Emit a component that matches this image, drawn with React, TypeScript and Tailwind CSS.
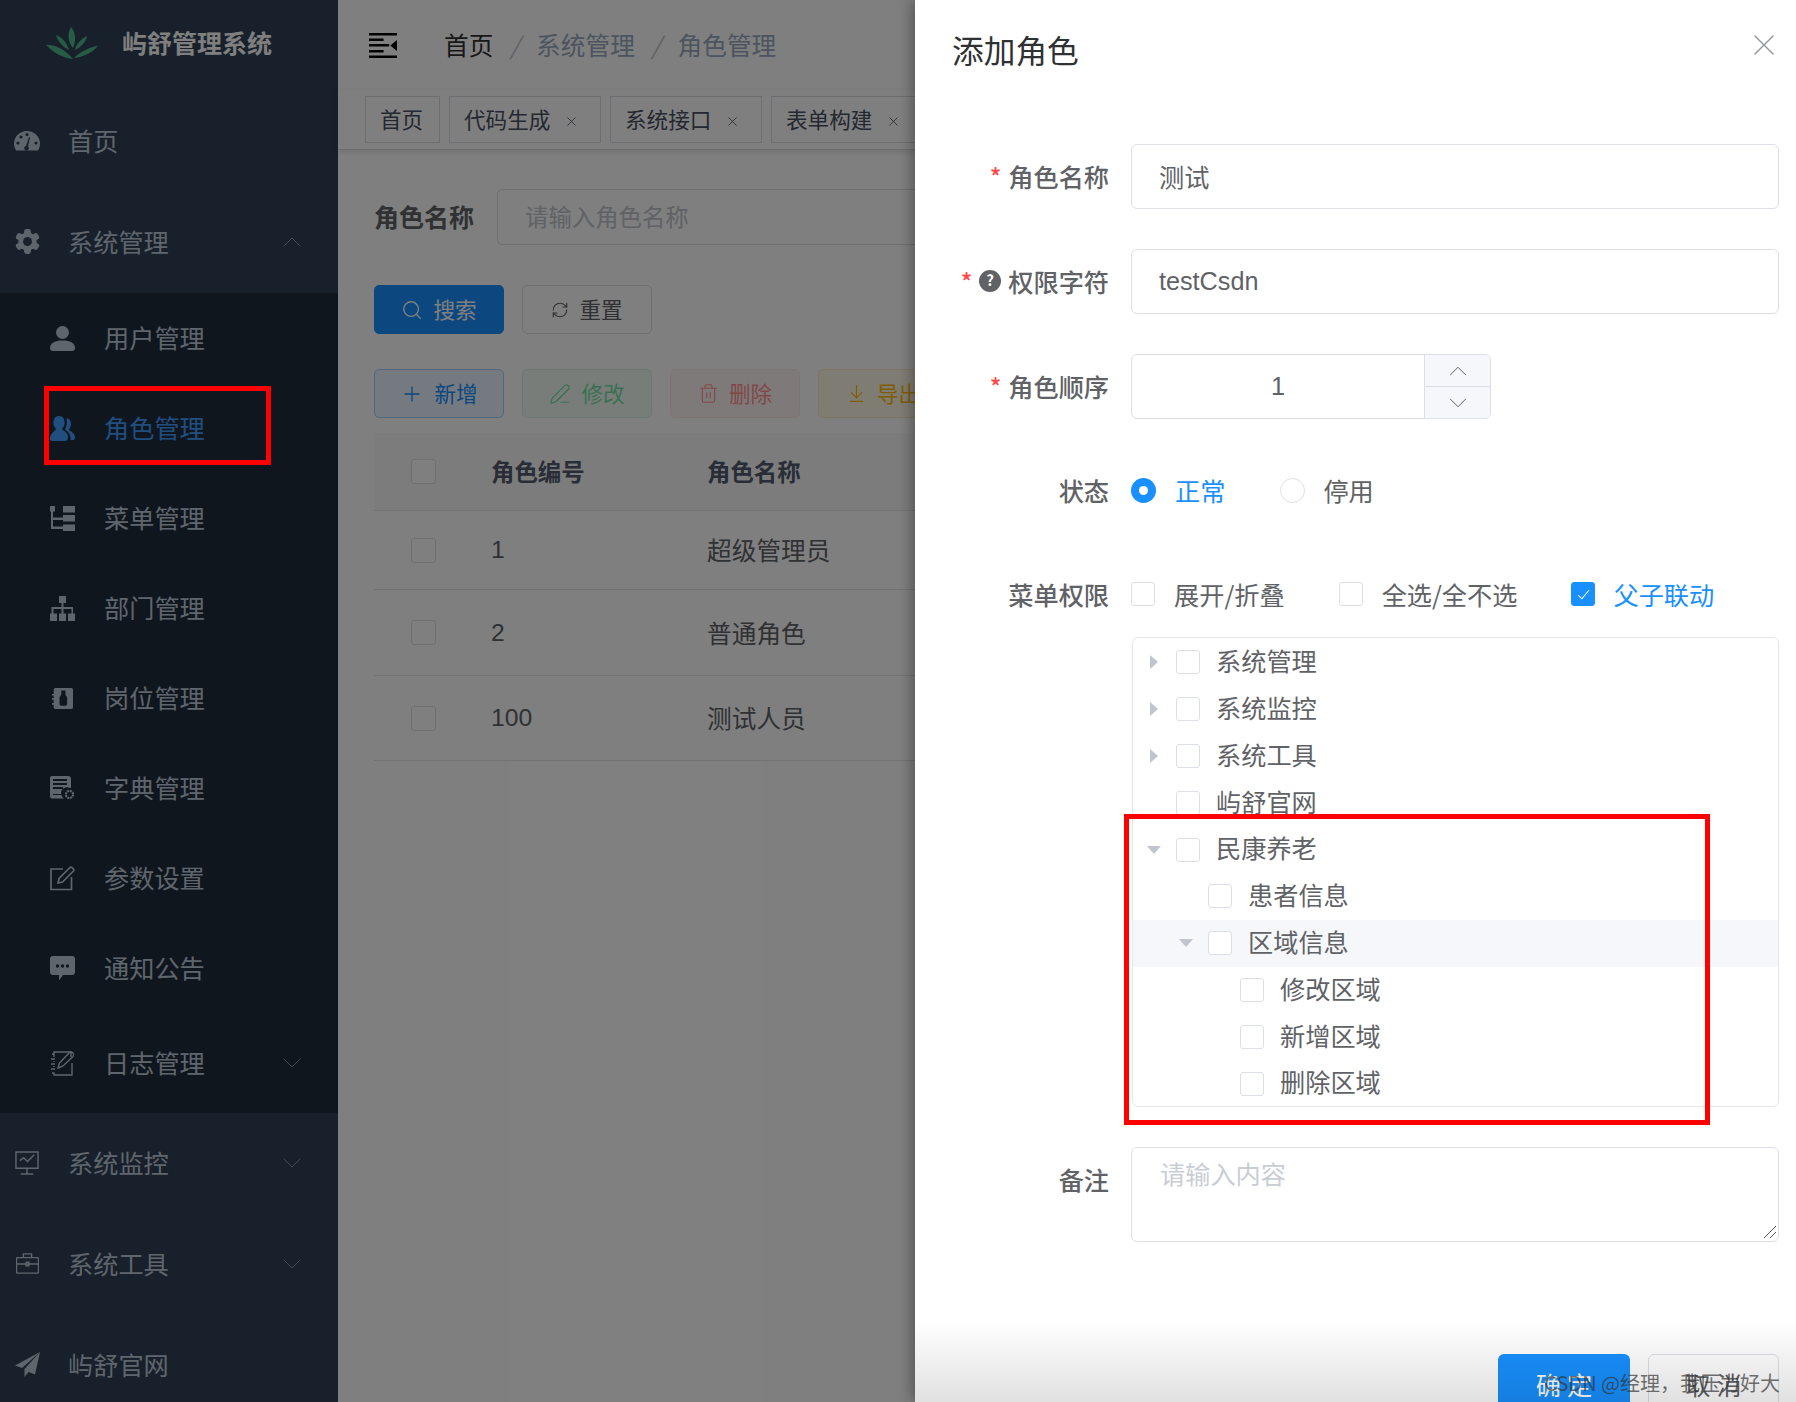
import type { ReactNode } from "react";
import { ArrowDownToLine, ChevronDown, ChevronUp, PenLine, Plus, RefreshCw, Search, Trash2, X } from "lucide-react";

const FONT = "font-['Noto_Sans_CJK_SC','Noto_Sans',sans-serif]";

const IconDashboard = () => (
    <svg viewBox="0 0 26 20" className="h-[20px] w-[26px]" fill="#bfcbd9">
        <path d="M13 0C5.8 0 0 5.6 0 12.6c0 2.6.8 5 2.2 7h21.6c1.4-2 2.2-4.4 2.2-7C26 5.6 20.2 0 13 0z" />
        <circle cx="4" cy="12" r="1.6" fill="#304156" />
        <circle cx="7" cy="6" r="1.6" fill="#304156" />
        <circle cx="13" cy="3.6" r="1.6" fill="#304156" />
        <circle cx="22" cy="12" r="1.6" fill="#304156" />
        <path d="M12 15l3-9 1 .4-2 9.2a2.2 2.2 0 1 1-2-.6z" fill="#304156" />
    </svg>
);

const IconGear = () => (
    <svg viewBox="0 0 26 26" className="h-[25px] w-[25px]" fill="#bfcbd9">
        <rect x="9.5" y="0" width="7" height="26" rx="2.5" />
        <rect x="9.5" y="0" width="7" height="26" rx="2.5" transform="rotate(60 13 13)" />
        <rect x="9.5" y="0" width="7" height="26" rx="2.5" transform="rotate(120 13 13)" />
        <circle cx="13" cy="13" r="9.5" />
        <circle cx="13" cy="13" r="4.6" fill="#304156" />
    </svg>
);

const IconUser = () => (
    <svg viewBox="0 0 25 25" className="h-[25px] w-[25px]" fill="#bfcbd9">
        <circle cx="12.5" cy="6.5" r="6.5" />
        <path d="M0 22c0-5 5-7.5 12.5-7.5S25 17 25 22c0 2-1 3-3 3H3c-2 0-3-1-3-3z" />
    </svg>
);

const IconPeople = () => (
    <svg viewBox="0 0 25 25" className="h-[25px] w-[25px]" fill="#409eff">
        <path d="M9 0c3.5 0 5.6 2.8 5.6 6.5 0 2.7-1 5-2.6 6.2 0 1.5 6 3 6 8.3 0 2.5-1 4-3 4H2c-1.5 0-2-1-2-2.5 0-5.5 6-8 6-9.8C4.4 11.5 3.4 9.2 3.4 6.5 3.4 2.8 5.5 0 9 0z" />
        <path d="M16.5 2c3 .6 4.5 3 4.5 6 0 2.5-1 4.5-2.2 5.5 0 1.2 6.2 3 6.2 7.5 0 2-.6 3-2 3h-2.5c.5-5-2-8-5.5-10.5 1.5-2.5 2.5-7.500 1.500-11.500z" />
    </svg>
);

const IconTree = () => (
    <svg viewBox="0 0 25 25" className="h-[25px] w-[25px]" fill="#bfcbd9">
        <path d="M0 0h5v5.500H3v6h10V14H3v6.500h10V23H1V5.500H0zM13 0h12v6.500H13zM13 9h12v6.500H13zM13 18.500h12V25H13z" />
    </svg>
);

const IconOrg = () => (
    <svg viewBox="0 0 25 25" className="h-[25px] w-[25px]" fill="#bfcbd9">
        <path d="M9 0h7v7h-2.500v4H23v6.500h2V25h-7v-7.500h3.500V13h-8v4.500H16V25H9v-7.500h2.500V13h-8v4.500H7V25H0v-7.500h1.500V11h10V7H9z" />
    </svg>
);

const IconPost = () => (
    <svg viewBox="0 0 25 25" className="h-[21px] w-[21px]" fill="#bfcbd9">
        <path
            fillRule="evenodd"
            d="M4 0h19a2 2 0 0 1 2 2v21a2 2 0 0 1-2 2H4a2 2 0 0 1-2-2v-3H0v-2h2v-4H0v-2h2V9H0V7h2V2a2 2 0 0 1 2-2zm7 3v5l-2 3v8a2 2 0 0 0 2 2h5a2 2 0 0 0 2-2v-8l-2-3V3z"
        />
    </svg>
);

const IconDict = () => (
    <svg viewBox="0 0 25 25" className="h-[25px] w-[25px]" fill="#bfcbd9">
        <path
            fillRule="evenodd"
            d="M2 0h16a3 3 0 0 1 3 3v9h-1a6 6 0 0 0-6 10.500H2a2 2 0 0 1-2-2V2a2 2 0 0 1 2-2zm1 3v2h14V3zm0 4v2h14V7zm0 4v2h10v-2zm0 7v1h8v-1z"
        />
        <circle cx="19.500" cy="18.500" r="3.600" fill="none" stroke="#bfcbd9" strokeWidth="2.200" strokeDasharray="2 .8" />
    </svg>
);

const IconEdit = () => (
    <svg viewBox="0 0 25 25" className="h-[25px] w-[25px]" fill="none" stroke="#bfcbd9" strokeWidth="1.700">
        <path d="M13 3H1v20.500h20.500V11" />
        <path d="M8 17l1-4.500L20 1.500a1.500 1.500 0 0 1 2 0l1.500 1.500a1.500 1.500 0 0 1 0 2L12.500 16z" />
    </svg>
);

const IconChat = () => (
    <svg viewBox="0 0 25 25" className="h-[25px] w-[25px]" fill="#bfcbd9">
        <path d="M3 0h19a3 3 0 0 1 3 3v13a3 3 0 0 1-3 3h-9l-4 5.500V19H3a3 3 0 0 1-3-3V3a3 3 0 0 1 3-3z" />
        <circle cx="7.500" cy="10" r="1.700" fill="#1f2d3d" />
        <circle cx="12.500" cy="10" r="1.700" fill="#1f2d3d" />
        <circle cx="17.500" cy="10" r="1.700" fill="#1f2d3d" />
    </svg>
);

const IconLog = () => (
    <svg viewBox="0 0 23 25" className="h-[25px] w-[23px]" fill="none" stroke="#bfcbd9" strokeWidth="1.400">
        <path d="M1 3h2V1h17v5M21 12v12H3v-2H1M0 8h4M0 13h4M0 18h4M3 3v3M3 10v1M3 15v1" />
        <path d="M7 17l1.500-5L18 2a2 2 0 0 1 4 3.500L12 15z" />
    </svg>
);

const IconMonitor = () => (
    <svg viewBox="0 0 25 25" className="h-[24px] w-[24px]" fill="none" stroke="#bfcbd9" strokeWidth="1.500">
        <path d="M1 1h23v17H1zM12.500 18v6M6 24h13M5 10l4-3 4 4 7-7" />
    </svg>
);

const IconCase = () => (
    <svg viewBox="0 0 25 23" className="h-[21px] w-[23px]" fill="none" stroke="#bfcbd9" strokeWidth="1.500">
        <path d="M1.500 5h22a1 1 0 0 1 1 1v15a1 1 0 0 1-1 1h-22a1 1 0 0 1-1-1V6a1 1 0 0 1 1-1zM8 5V1h9v4M.5 12h24M11 10h3v4h-3z" />
    </svg>
);

const IconPlane = () => (
    <svg viewBox="0 0 25 25" className="h-[25px] w-[25px]" fill="#bfcbd9">
        <path d="M25 0L0 13.500l7 2.500zM25 0L9.500 17v8l4-5 6.500 2.500z" />
    </svg>
);

const Logo = () => (
    <svg viewBox="0 0 52 32" className="h-[32px] w-[52px]" fill="#4fb88f">
        <path d="M25 0C30 6 30 14 27 21C22 15 21 7 25 0z" />
        <path d="M10 8C16 10 21 16 23 23C17 20 12 15 10 8z" />
        <path d="M41 9C40 15 35 20 29 23C30 17 35 12 41 9z" />
        <path d="M0 18C9 17 20 23 27 32C17 31 8 26 0 18z" />
        <path d="M52 19C46 26 37 30 28 31C34 25 43 20 52 19z" />
    </svg>
);

const MenuToggle = () => (
    <svg viewBox="0 0 25 25" className="h-[25px] w-[28px]" preserveAspectRatio="none" fill="#000">
        <path d="M0 0h25v2.500H0zM0 11h18v2.500H0zM0 22.500h25V25H0zM0 5.500h13V8H0zM0 17h13v2.500H0zM25 7v11l-6-5.500z" />
    </svg>
);

const TopItem = ({ icon, label, arrow, className = "" }: { icon: ReactNode; label: string; arrow?: "up" | "down"; className?: string }) => (
    <div className={`flex h-[101px] shrink-0 items-center bg-[#304156] pb-[2px] pl-[14px] pr-[30px] ${className}`}>
        <span className="flex w-[26px] justify-center">{icon}</span>
        <span className="ml-[28px] flex-1 text-[25.2px] text-[#bfcbd9]">{label}</span>
        {arrow === "up" && <ChevronUp size={32} strokeWidth={0.75} className="text-[#909399]" />}
        {arrow === "down" && <ChevronDown size={32} strokeWidth={0.75} className="text-[#909399]" />}
    </div>
);

const SubItem = ({ icon, label, active, arrow, tall }: { icon: ReactNode; label: string; active?: boolean; arrow?: boolean; tall?: boolean }) => (
    <div className={`flex items-center pl-[50px] pr-[30px] ${tall ? "h-[100px]" : "h-[90px]"}`}>
        <span className="flex w-[25px] justify-center">{icon}</span>
        <span className={`ml-[29px] flex-1 text-[25.2px] ${active ? "text-[#409eff]" : "text-[#bfcbd9]"}`}>{label}</span>
        {arrow && <ChevronDown size={32} strokeWidth={0.75} className="text-[#909399]" />}
    </div>
);

const Sidebar = () => (
    <aside className="flex h-full w-[338px] shrink-0 flex-col overflow-hidden bg-[#304156] shadow-[2px_0_6px_rgba(0,21,41,0.35)]">
        <div className="flex h-[91px] shrink-0 items-center pb-[5px] pl-[46px]">
            <Logo />
            <h1 className="ml-[24px] text-[25px] font-bold text-white">屿舒管理系统</h1>
        </div>
        <TopItem icon={<IconDashboard />} label="首页" />
        <TopItem icon={<IconGear />} label="系统管理" arrow="up" />
        <div className="shrink-0 bg-[#1f2d3d]">
            <SubItem icon={<IconUser />} label="用户管理" />
            <SubItem icon={<IconPeople />} label="角色管理" active />
            <SubItem icon={<IconTree />} label="菜单管理" />
            <SubItem icon={<IconOrg />} label="部门管理" />
            <SubItem icon={<IconPost />} label="岗位管理" />
            <SubItem icon={<IconDict />} label="字典管理" />
            <SubItem icon={<IconEdit />} label="参数设置" />
            <SubItem icon={<IconChat />} label="通知公告" />
            <SubItem icon={<IconLog />} label="日志管理" arrow tall />
        </div>
        <TopItem icon={<IconMonitor />} label="系统监控" arrow="down" />
        <TopItem icon={<IconCase />} label="系统工具" arrow="down" />
        <TopItem icon={<IconPlane />} label="屿舒官网" />
    </aside>
);

const Tag = ({ label, closable = true, width }: { label: string; closable?: boolean; width: string }) => (
    <div className={`flex h-[47px] shrink-0 items-center gap-[14px] border border-[#d8dce5] bg-white pl-[14px] text-[21.6px] text-[#495060] ${width}`}>
        <span>{label}</span>
        {closable && <X size={15} strokeWidth={1.3} className="mt-[3px]" />}
    </div>
);

const Btn = ({ icon, label, className }: { icon: ReactNode; label: string; className: string }) => (
    <button className={`flex h-[49px] w-[130px] shrink-0 items-center justify-center gap-[10px] rounded-[5px] border text-[21.6px] ${className}`}>
        {icon}
        <span>{label}</span>
    </button>
);

const TableCheck = () => <span className="block h-[25px] w-[25px] rounded-[3px] border border-[#dcdfe6] bg-white" />;

const TableRow = ({ id, name, className }: { id: string; name: string; className: string }) => (
    <div className={`flex items-center border-b border-[#dfe6ec] text-[24.7px] text-[#606266] ${className}`}>
        <span className="ml-[37px] w-[80px]">
            <TableCheck />
        </span>
        <span className="w-[216px] font-['Liberation_Sans','Noto_Sans_CJK_SC',sans-serif]">{id}</span>
        <span className="whitespace-nowrap">{name}</span>
    </div>
);

const Main = () => (
    <main className="flex min-w-0 flex-1 flex-col bg-white">
        <header className="flex h-[90px] shrink-0 items-center pl-[31px]">
            <MenuToggle />
            <div className="ml-[47px] flex items-center text-[24.7px] text-[#97a8be]">
                <span className="text-[#303133]">首页</span>
                <span className="mx-[16.5px] italic text-[#c0c4cc]">/</span>
                <span>系统管理</span>
                <span className="mx-[16.5px] italic text-[#c0c4cc]">/</span>
                <span>角色管理</span>
            </div>
        </header>
        <div className="flex h-[60px] shrink-0 items-center gap-[9px] overflow-hidden border-b border-[#d8dce5] pl-[27px] shadow-[0_2px_6px_rgba(0,0,0,0.12)]">
            <Tag label="首页" closable={false} width="w-[75px]" />
            <Tag label="代码生成" width="w-[152px]" />
            <Tag label="系统接口" width="w-[152px]" />
            <Tag label="表单构建" width="w-[152px]" />
        </div>
        <div className="flex flex-1 flex-col px-[36px]">
            <div className="mt-[39px] flex h-[56px] items-center">
                <label className="w-[123px] shrink-0 text-[25px] font-bold text-[#606266]">角色名称</label>
                <div className="flex h-[56px] w-[500px] shrink-0 items-center rounded-[5px] border border-[#dcdfe6] pl-[27px] text-[23.4px] text-[#c0c4cc]">
                    请输入角色名称
                </div>
            </div>
            <div className="mt-[40px] flex gap-[18px]">
                <Btn icon={<Search size={22} strokeWidth={1.5} />} label="搜索" className="border-[#1890ff] bg-[#1890ff] text-white" />
                <Btn icon={<RefreshCw size={18} strokeWidth={1.5} />} label="重置" className="border-[#dcdfe6] bg-white text-[#606266]" />
            </div>
            <div className="mt-[35px] flex gap-[18px]">
                <Btn icon={<Plus size={24} strokeWidth={1.3} />} label="新增" className="border-[#a3d3ff] bg-[#e8f4ff] text-[#1890ff]" />
                <Btn icon={<PenLine size={22} strokeWidth={1.3} />} label="修改" className="border-[#bce8d9] bg-[#e7faf0] text-[#13ce66] opacity-60" />
                <Btn icon={<Trash2 size={21} strokeWidth={1.3} />} label="删除" className="border-[#ffdbdb] bg-[#ffeded] text-[#ff4949] opacity-60" />
                <Btn icon={<ArrowDownToLine size={21} strokeWidth={1.3} />} label="导出" className="border-[#ffe9bf] bg-[#fff8e6] text-[#ffba00]" />
            </div>
            <div className="mt-[15px] flex h-[78px] shrink-0 items-center border-b border-[#dfe6ec] bg-[#f8f8f9] text-[23.4px] font-bold text-[#515a6e]">
                <span className="ml-[37px] w-[80px]">
                    <TableCheck />
                </span>
                <span className="w-[216px]">角色编号</span>
                <span className="whitespace-nowrap">角色名称</span>
            </div>
            <TableRow id="1" name="超级管理员" className="h-[79px]" />
            <TableRow id="2" name="普通角色" className="h-[86px]" />
            <TableRow id="100" name="测试人员" className="h-[85px]" />
        </div>
    </main>
);

const Check = ({ on = false }: { on?: boolean }) => (
    <span className={`flex h-[24px] w-[24px] shrink-0 items-center justify-center rounded-[3px] border ${on ? "border-[#1890ff] bg-[#1890ff]" : "border-[#dcdfe6] bg-white"}`}>
        {on && (
            <svg viewBox="0 0 14 14" className="h-[15px] w-[15px]" fill="none" stroke="#fff" strokeWidth="1">
                <path d="M2 7.500L5.500 11 12 3" />
            </svg>
        )}
    </span>
);

const FormRow = ({ label, required, help, className, children }: { label: string; required?: boolean; help?: boolean; className: string; children: ReactNode }) => (
    <div className={`flex shrink-0 items-center ${className}`}>
        <label className="flex w-[194px] shrink-0 items-center justify-end text-[25.2px] font-medium leading-none text-[#606266]">
            {required && <span className="mr-[7px] text-[24px] text-[#ff4949]">*</span>}
            {help && (
                <svg viewBox="0 0 22 22" className="mr-[7px] h-[22px] w-[22px]">
                    <circle cx="11" cy="11" r="11" fill="#606266" />
                    <text x="11" y="16" textAnchor="middle" fontSize="15" fontWeight="700" fill="#fff">?</text>
                </svg>
            )}
            {label}
        </label>
        <div className="ml-[22px] min-w-0 flex-1">{children}</div>
    </div>
);

const TextBox = ({ value, latin }: { value: string; latin?: boolean }) => (
    <div className={`flex h-[65px] items-center rounded-[6px] border border-[#dcdfe6] pl-[27px] text-[25.2px] text-[#606266] ${latin ? "font-['Liberation_Sans',sans-serif]" : ""}`}>
        {value}
    </div>
);

const TreeRow = ({ label, level = 0, arrow, hover }: { label: string; level?: 0 | 1 | 2; arrow?: "right" | "down"; hover?: boolean }) => (
    <div className={`flex h-[46.8px] items-center ${hover ? "bg-[#f5f7fa]" : ""} ${level === 0 ? "pl-[14px]" : level === 1 ? "pl-[46px]" : "pl-[78px]"}`}>
        <span className="flex w-[14px] justify-center">
            {arrow === "right" && <span className="h-0 w-0 border-y-[7px] border-l-[8px] border-y-transparent border-l-[#c0c4cc]" />}
            {arrow === "down" && <span className="h-0 w-0 border-x-[7px] border-t-[8px] border-x-transparent border-t-[#c0c4cc]" />}
        </span>
        <span className="ml-[15px]">
            <Check />
        </span>
        <span className="mb-[3px] ml-[16px] text-[25.2px] leading-none text-[#606266]">{label}</span>
    </div>
);

const Drawer = () => (
    <section className="absolute inset-y-0 right-0 flex w-[881px] flex-col overflow-hidden bg-white pr-[17px] shadow-[-4px_0_12px_rgba(0,0,0,0.3)]">
        <div className="flex h-[144px] shrink-0 items-start justify-between pl-[37px] pt-[25px]">
            <h2 className="text-[31.7px] leading-[48px] text-[#303133]">添加角色</h2>
            <X size={36} strokeWidth={0.9} className="mr-[-3px] mt-[2px] text-[#909399]" />
        </div>
        <FormRow label="角色名称" required className="h-[65px]">
            <TextBox value="测试" />
        </FormRow>
        <FormRow label="权限字符" required help className="mt-[40px] h-[65px]">
            <TextBox value="testCsdn" latin />
        </FormRow>
        <FormRow label="角色顺序" required className="mt-[40px] h-[65px]">
            <div className="flex h-[65px] w-[360px] overflow-hidden rounded-[6px] border border-[#dcdfe6]">
                <div className="flex flex-1 items-center justify-center font-['Liberation_Sans',sans-serif] text-[25.2px] text-[#606266]">1</div>
                <div className="flex w-[66px] flex-col border-l border-[#dcdfe6] bg-[#f5f7fa] text-[#606266]">
                    <span className="flex flex-1 items-center justify-center border-b border-[#dcdfe6]">
                        <ChevronUp size={30} strokeWidth={0.8} />
                    </span>
                    <span className="flex flex-1 items-center justify-center">
                        <ChevronDown size={30} strokeWidth={0.8} />
                    </span>
                </div>
            </div>
        </FormRow>
        <FormRow label="状态" className="mt-[39px] h-[65px]">
            <div className="flex items-center text-[25.2px]">
                <span className="flex h-[25px] w-[25px] items-center justify-center rounded-full bg-[#1890ff]">
                    <span className="h-[9px] w-[9px] rounded-full bg-white" />
                </span>
                <span className="ml-[19px] text-[#1890ff]">正常</span>
                <span className="ml-[55px] h-[25px] w-[25px] rounded-full border border-[#dcdfe6]" />
                <span className="ml-[18px] text-[#606266]">停用</span>
            </div>
        </FormRow>
        <FormRow label="菜单权限" className="mt-[39px] h-[65px]">
            <div className="flex items-center text-[25.2px]">
                <Check />
                <span className="ml-[19px] text-[#606266]">展开/折叠</span>
                <span className="ml-[54px]">
                    <Check />
                </span>
                <span className="ml-[19px] text-[#606266]">全选/全不选</span>
                <span className="ml-[54px]">
                    <Check on />
                </span>
                <span className="ml-[18px] text-[#1890ff]">父子联动</span>
            </div>
        </FormRow>
        <div className="mt-[10px] flex shrink-0">
            <div className="ml-[217px] h-[470px] flex-1 overflow-hidden rounded-[6px] border border-[#e5e6e7] pt-[1px]">
                <TreeRow label="系统管理" arrow="right" />
                <TreeRow label="系统监控" arrow="right" />
                <TreeRow label="系统工具" arrow="right" />
                <TreeRow label="屿舒官网" />
                <TreeRow label="民康养老" arrow="down" />
                <TreeRow label="患者信息" level={1} />
                <TreeRow label="区域信息" level={1} arrow="down" hover />
                <TreeRow label="修改区域" level={2} />
                <TreeRow label="新增区域" level={2} />
                <TreeRow label="删除区域" level={2} />
            </div>
        </div>
        <div className="mt-[40px] flex shrink-0 items-start">
            <label className="w-[194px] shrink-0 pt-[15px] text-right text-[25.2px] font-medium leading-[34px] text-[#606266]">备注</label>
            <div className="relative ml-[22px] h-[95px] flex-1 rounded-[6px] border border-[#dcdfe6] pl-[28px] pt-[8px] text-[25.2px] leading-[34px] text-[#c9cdd4]">
                请输入内容
                <svg viewBox="0 0 14 14" className="absolute bottom-[2px] right-[1px] h-[14px] w-[14px]" fill="none" stroke="#555" strokeWidth="1">
                    <path d="M1 13L13 1M7 13l6-6" />
                </svg>
            </div>
        </div>
        <div className="mt-[112px] flex shrink-0 justify-end gap-[18px]">
            <button className="h-[70px] w-[132px] rounded-[6px] bg-[#1890ff] pb-[8px] pl-[6px] text-[25.2px] tracking-[6px] text-white">确定</button>
            <button className="h-[70px] w-[131px] rounded-[6px] border border-[#dcdfe6] bg-white pb-[8px] pl-[6px] text-[25.2px] tracking-[6px] text-[#606266]">取消</button>
        </div>
    </section>
);

export default function App() {
    return (
        <div className={`relative flex h-[1402px] w-[1796px] overflow-hidden ${FONT}`}>
            <Sidebar />
            <Main />
            {/* dark mask under the drawer */}
            <div className="absolute inset-0 bg-black/50" />
            <Drawer />
            {/* bottom fade baked into the screenshot */}
            <div className="pointer-events-none absolute bottom-0 right-0 h-[82px] w-[881px] bg-gradient-to-b from-white/0 to-black/12" />
            <span className="pointer-events-none absolute bottom-[4px] right-[16px] text-[20px] leading-[30px] text-[#333]/70">CSDN @经理，我压力好大</span>
            {/* hand-drawn annotations */}
            <div className="pointer-events-none absolute left-[44px] top-[386px] h-[79px] w-[227px] border-[5px] border-[#ff0000]" />
            <div className="pointer-events-none absolute left-[1124px] top-[814px] h-[311px] w-[586px] border-[5px] border-[#ff0000]" />
        </div>
    );
}
